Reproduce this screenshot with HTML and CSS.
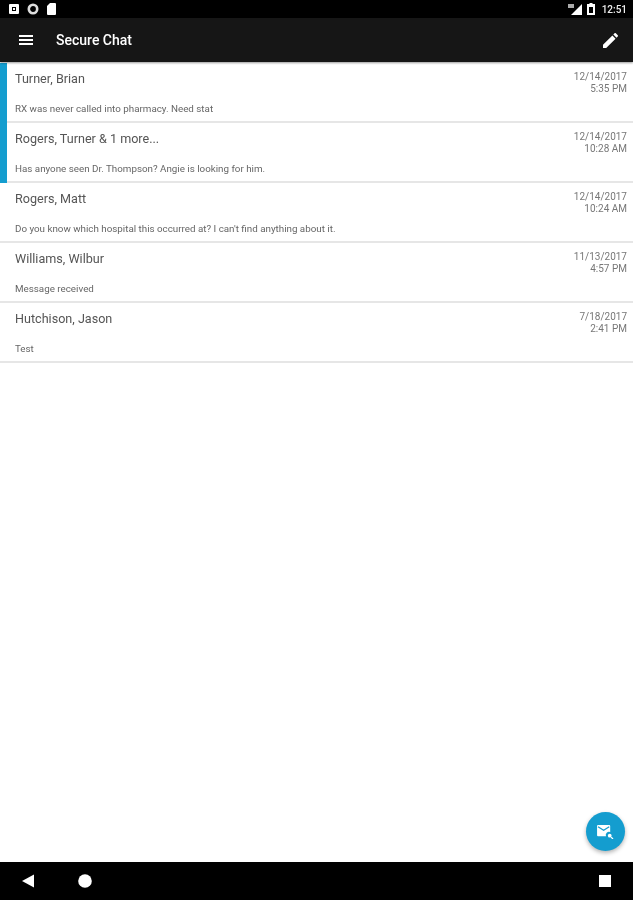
FILE: index.html
```html
<!DOCTYPE html>
<html>
<head>
<meta charset="utf-8">
<title>Secure Chat</title>
<link rel="stylesheet" href="styles.css">
</head>
<body>
<div class="screen">
	<div class="status-bar">
		<div class="status-icons">
			<svg width="10" height="10" viewBox="0 0 10 10"><path fill="#fff" fill-rule="evenodd" d="M1 0h8a1 1 0 0 1 1 1v8a1 1 0 0 1-1 1H1a1 1 0 0 1-1-1V1a1 1 0 0 1 1-1zM3 3v4h4V3z"/><rect x="4" y="4" width="2" height="2" fill="#fff"/></svg>
			<svg width="12" height="12" viewBox="0 0 12 12"><circle cx="6" cy="6" r="4.2" fill="none" stroke="#ddd" stroke-width="2.6"/></svg>
			<svg width="9" height="12" viewBox="0 0 9 12"><path fill="#fff" d="M3 0h5a1 1 0 0 1 1 1v10a1 1 0 0 1-1 1H1a1 1 0 0 1-1-1V3z"/></svg>
		</div>
		<div class="status-right">
			<svg width="14" height="11" viewBox="0 0 14 11"><path fill="#fff" d="M14 0v11H3z"/><rect x="0" y="0" width="6" height="4" fill="#aaa"/></svg>
			<svg width="8" height="12" viewBox="0 0 8 12"><path fill="#fff" fill-rule="evenodd" d="M2.500 0h3v1H8v11H0V1h2.500zM2 4v6h4V4z"/></svg>
			<span class="clock">12:51</span>
		</div>
	</div>

	<div class="app-bar">
		<svg class="menu-icon" width="14" height="12" viewBox="0 0 14 12"><path fill="#fff" d="M0 1h14v2H0zM0 5h14v2H0zM0 9h14v2H0z"/></svg>
		<div class="app-title">Secure Chat</div>
		<svg class="edit-icon" width="15" height="15" viewBox="0 0 16 16"><path fill="#fff" d="M0 16v-3.400L10 2.600 13.400 6 3.400 16zM11 1.600 12.300.3a1 1 0 0 1 1.400 0l2 2a1 1 0 0 1 0 1.400L14.400 5z"/></svg>
	</div>

	<div class="chat-list">
		<div class="chat-row">
			<div class="unread-bar"></div>
			<div class="chat-body">
				<div class="chat-main">
					<div class="chat-name">Turner, Brian</div>
					<div class="chat-msg">RX was never called into pharmacy. Need stat</div>
				</div>
				<div class="chat-date">12/14/2017<br>5:35 PM</div>
			</div>
		</div>
		<div class="chat-row">
			<div class="unread-bar"></div>
			<div class="chat-body">
				<div class="chat-main">
					<div class="chat-name">Rogers, Turner &amp; 1 more...</div>
					<div class="chat-msg">Has anyone seen Dr. Thompson? Angie is looking for him.</div>
				</div>
				<div class="chat-date">12/14/2017<br>10:28 AM</div>
			</div>
		</div>
		<div class="chat-row">
			<div class="chat-body read">
				<div class="chat-main">
					<div class="chat-name">Rogers, Matt</div>
					<div class="chat-msg">Do you know which hospital this occurred at? I can't find anything about it.</div>
				</div>
				<div class="chat-date">12/14/2017<br>10:24 AM</div>
			</div>
		</div>
		<div class="chat-row">
			<div class="chat-body read">
				<div class="chat-main">
					<div class="chat-name">Williams, Wilbur</div>
					<div class="chat-msg">Message received</div>
				</div>
				<div class="chat-date">11/13/2017<br>4:57 PM</div>
			</div>
		</div>
		<div class="chat-row">
			<div class="chat-body read">
				<div class="chat-main">
					<div class="chat-name">Hutchison, Jason</div>
					<div class="chat-msg">Test</div>
				</div>
				<div class="chat-date">7/18/2017<br>2:41 PM</div>
			</div>
		</div>
	</div>

	<div class="fab">
		<svg width="17" height="15" viewBox="0 0 18 16"><path fill="#fff" d="M1 1h12a1 1 0 0 1 1 1v6.500a3.500 3.500 0 0 0-4.500 4.500H1a1 1 0 0 1-1-1V2a1 1 0 0 1 1-1z"/><path fill="none" stroke="#149dcf" stroke-width="1.300" d="M1 3l6 3.800L13 3"/><circle cx="13.500" cy="12.500" r="2" fill="#fff"/><path stroke="#fff" stroke-width="1.400" d="M15 14l2 2"/></svg>
	</div>

	<div class="nav-bar">
		<svg class="nav-back" width="12" height="14" viewBox="0 0 13 14"><path fill="#fff" d="M13 0v14L0 7z"/></svg>
		<svg class="nav-home" width="14" height="14" viewBox="0 0 14 14"><circle cx="7" cy="7" r="6.800" fill="#fff"/></svg>
		<div class="nav-square"></div>
	</div>
</div>
</body>
</html>
```

FILE: styles.css
```css
html, body {
	margin: 0;
	padding: 0;
	background: #fff;
}

.screen {
	position: relative;
	width: 633px;
	height: 900px;
	display: flex;
	flex-direction: column;
	overflow: hidden;
	font-family: Roboto, "Liberation Sans", sans-serif;
	background: #fff;
	filter: blur(0.5px);
}

.status-bar {
	height: 18px;
	flex: none;
	background: #000;
	display: flex;
	align-items: center;
	justify-content: space-between;
	padding: 0 6px 0 9px;
}

.status-icons {
	display: flex;
	align-items: center;
	gap: 8px;
}

.status-right {
	display: flex;
	align-items: center;
	gap: 5px;
}

.clock {
	color: #eee;
	font-size: 10px;
	font-weight: 500;
	margin-left: 2px;
}

.app-bar {
	height: 44px;
	flex: none;
	background: #161616;
	display: flex;
	align-items: center;
	padding: 0 15px 0 19px;
	box-shadow: 0 1px 2px rgba(0,0,0,0.4);
	z-index: 1;
}

.app-title {
	color: #fff;
	font-size: 14px;
	font-weight: 500;
	margin-left: 23px;
	flex: 1;
}

.chat-list {
	flex: 1;
	padding-top: 1px;
}

.chat-row {
	height: 60px;
	display: flex;
}

.unread-bar {
	width: 7px;
	flex: none;
	background: #149dcf;
}

.chat-body {
	flex: 1;
	min-width: 0;
	box-sizing: border-box;
	border-bottom: 2px solid #e6e6e6;
	padding: 0 6px 0 8px;
	display: flex;
	justify-content: space-between;
}

.chat-body.read {
	padding-left: 15px;
}

.chat-name {
	color: #555;
	font-size: 12.600px;
	line-height: 16px;
	margin-top: 8px;
}

.chat-msg {
	color: #666;
	font-size: 9.800px;
	line-height: 12px;
	margin-top: 16px;
}

.chat-date {
	color: #777;
	font-size: 10px;
	line-height: 12px;
	text-align: right;
	margin-top: 8px;
}

.fab {
	position: absolute;
	left: 586px;
	top: 812px;
	width: 39px;
	height: 39px;
	border-radius: 50%;
	background: #149dcf;
	box-shadow: 0 2px 4px rgba(0,0,0,0.3);
	display: flex;
	align-items: center;
	justify-content: center;
}

.nav-bar {
	height: 38px;
	flex: none;
	background: #000;
	display: flex;
	align-items: center;
	padding: 0 22px;
}

.nav-home {
	margin-left: 44px;
}

.nav-square {
	width: 12px;
	height: 12px;
	background: #fff;
	margin-left: auto;
}
```
